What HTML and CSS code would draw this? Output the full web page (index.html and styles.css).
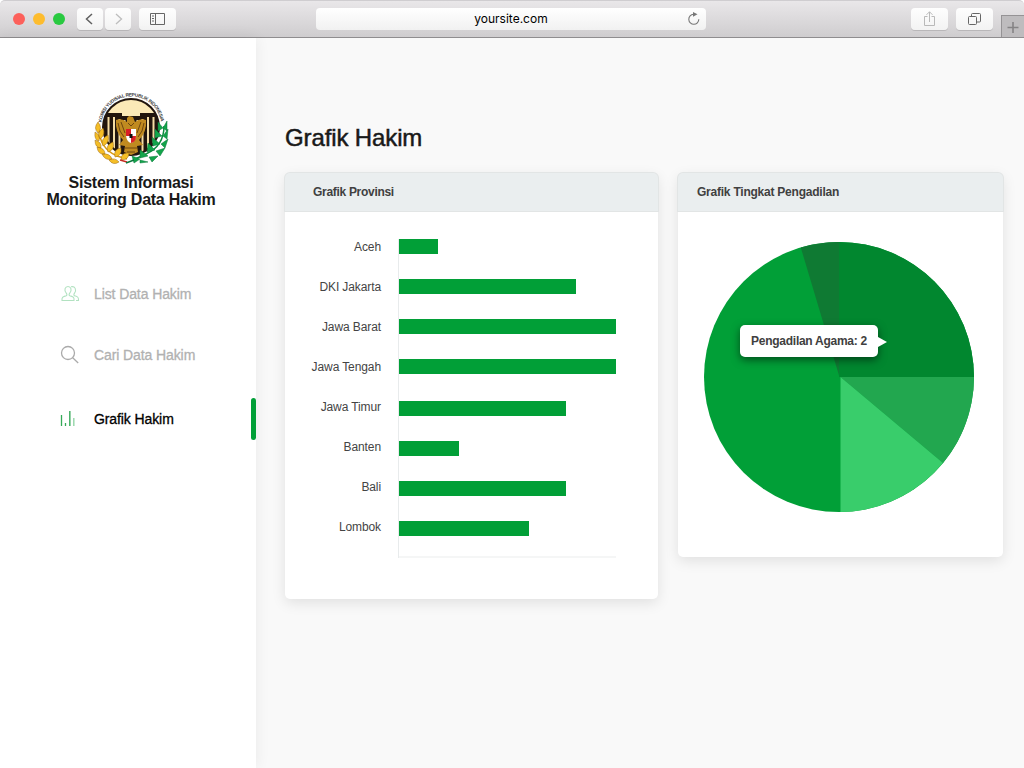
FILE: index.html
```html
<!DOCTYPE html>
<html lang="id">
<head>
<meta charset="utf-8">
<title>Grafik Hakim</title>
<link rel="stylesheet" href="styles.css">
</head>
<body>
<header class="browser">
  <div class="lights"><i class="red"></i><i class="amber"></i><i class="green"></i></div>
  <div class="btn back"><svg width="27" height="22"><path d="M15 6l-5.500 5 5.500 5" fill="none" stroke="#606060" stroke-width="1.500"/></svg></div>
  <div class="btn fwd"><svg width="27" height="22"><path d="M11 6l5.500 5-5.500 5" fill="none" stroke="#bdbdbd" stroke-width="1.300"/></svg></div>
  <div class="btn side"><svg width="37" height="22"><path d="M11.500 5.500h14v11h-14zM16.500 5.500v11M13 8h2M13 10.500h2M13 13h2" fill="none" stroke="#666"/></svg></div>
  <div class="url"><span class="address">yoursite.com</span><svg class="reload" width="14" height="14"><path d="M6.500 2.300a5 5 0 1 0 5.300 5" fill="none" stroke="#777" stroke-width="1.100"/><path d="M6 0l4.500 2.300-4.500 2.500z" fill="#777"/></svg></div>
  <div class="btn share"><svg width="37" height="22"><path d="M16.500 8.500h-3v9h10v-9h-3M18.500 14V3.800M15.500 6.800l3-3 3 3" fill="none" stroke="#b9b9b9"/></svg></div>
  <div class="btn tabs"><svg width="37" height="22"><rect x="12.500" y="8.500" width="8" height="8" rx="1" fill="none" stroke="#666"/><path d="M15.500 8V6.500q0-1 1-1h7q1 0 1 1v6.500q0 1-1 1H21" fill="none" stroke="#666"/></svg></div>
  <div class="newtab"><svg width="22" height="22"><path d="M11 6v11M5.500 11.500h11" stroke="#858385" stroke-width="1.600"/></svg></div>
</header>
<div class="app">
  <aside class="sidebar">
    <svg class="emblem" viewBox="0 0 92 88" width="92" height="88">
      <defs><path id="ring" d="M15.500 38.500a30 30 0 0 1 59.500 0"/><clipPath id="disc"><circle cx="45" cy="43" r="27"/></clipPath></defs>
      <text class="motto"><textPath href="#ring" startOffset="0" textLength="85">KOMISI YUDISIAL REPUBLIK INDONESIA</textPath></text>
      <circle cx="45" cy="43" r="29" fill="#21150e"/>
      <g clip-path="url(#disc)">
        <path d="M27 12h37l4 14v3H54v3H36v-3H22v-3z" fill="#fbe9b7"/>
        <path d="M22.500 33v26M28 33v34M33.500 35v35M38.500 36v12M51.500 36v12M56.500 35v35M62 33v34M67.500 33v26" stroke="#f5dda5" stroke-width="2"/>
      </g>
      <path d="M41 38q-5-4-11-2-1 12 7 20l-4 5 6 1-1 6 7 3 7-3-1-6 6-1-4-5q8-8 7-20-6-2-11 2l-2-5-4-1-2 2z" fill="#c08a20"/>
      <path d="M32 39q1 9 6 14M35 38l4 11M58 39q-1 9-6 14M55 38l-4 11M39 64h12M41 68h8M42 39l3 3 3-3" fill="none" stroke="#6f4710" stroke-width="1"/>
      <path d="M40 45h10v7q-1 6-5 7-4-1-5-7z" fill="#fff"/><path d="M40 45h5v7h5q0 6-5 7v-7h-5z" fill="#d91e27"/><path d="M43.500 50h3v4h-3z" fill="#111"/>
      <path d="M13 44q0 20 18 28l10 3" fill="none" stroke="#d99a15" stroke-width="1.500"/>
      <g fill="#f5be26" stroke="#9b6814" stroke-width=".5">
        <path d="M12 49q-5-5 0-11 5 6 0 11zM14 55q-4-6 3-11 3 7-3 11zM13 57q-5-1-4-9 6 3 4 9zM17 62q-3-7 5-11 2 8-5 11zM15 64q-6 0-6-8 7 2 6 8zM22 68q-3-7 5-10 2 8-5 10zM19 70q-7 1-8-7 8 1 8 7zM29 73q-2-8 6-9 1 8-6 9zM26 75q-7 2-10-5 8-1 10 5zM35 76q0-8 8-7 0 7-8 7zM33 78q-6 4-10-2 6-3 10 2z"/>
      </g>
      <path d="M78 42q0 20-18 28l-13 6" fill="none" stroke="#0c8d3e" stroke-width="1.500"/>
      <path d="M77 44l-5-6v9zM77 44l4-7v10zM76 52l-7-7v9zM77 52l5-7-1 10zM74 60l-8-7 1 9zM75 60l7-5-3 9zM69 66l-7-7-1 9zM70 67l9-3-5 8zM62 72l-8-6v8zM63 73l9-1-6 6zM54 75l-8-3 2 7zM54 76l8 2-8 1z" fill="#12a44a" stroke="#08773a" stroke-width=".5"/>
      <path d="M34 76l7 2" stroke="#c62b20" stroke-width="1.500"/><path d="M40 79l8-3" stroke="#08773a" stroke-width="1.500"/>
    </svg>
    <h2 class="brand">Sistem Informasi<br><span>Monitoring Data Hakim</span></h2>
    <nav class="nav">
      <a class="item list"><svg width="20" height="18"><g fill="none" stroke="#b2e2c1" stroke-width="1.100"><path d="M2 15.500c-.4-4 1.500-3.800 4.200-4.800 1-.4.800-1.500.2-2.300C3.500 5 5.200 1.500 8 1.500s4.500 3.500 1.600 6.900c-.6.800-.8 1.900.2 2.300 2.700 1 4.700.8 4.200 4.800z"/><path d="M11 1.800c4-1 6 3 3.400 6.600-.6.800-.8 1.900.2 2.300 2.200.9 4.200.8 3.900 4.800H16"/></g></svg><span>List Data Hakim</span></a>
      <a class="item search"><svg width="20" height="20"><g fill="none" stroke="#aaa" stroke-width="1.300"><circle cx="8" cy="8" r="6.500"/><path d="M12.700 12.700l5.500 5.300"/></g></svg><span>Cari Data Hakim</span></a>
      <a class="item chart"><svg width="20" height="18"><path d="M1.500 5v11M5.500 13v3" stroke="#35a958" stroke-width="1.300"/><path d="M9.800 1v15" stroke="#4fb46d" stroke-width="1.600"/><path d="M13.800 8v8" stroke="#9bd8ad" stroke-width="1.500"/></svg><span>Grafik Hakim</span><i class="marker"></i></a>
    </nav>
  </aside>
  <main class="content">
    <h1 class="title">Grafik Hakim</h1>
    <div class="cards">
      <section class="card province">
        <h3 class="head">Grafik Provinsi</h3>
        <div class="bars">
          <div class="labels"><span class="l1">Aceh</span><span class="l2">DKI Jakarta</span><span class="l3">Jawa Barat</span><span class="l4">Jawa Tengah</span><span class="l5">Jawa Timur</span><span class="l6">Banten</span><span class="l7">Bali</span><span class="l8">Lombok</span></div>
          <div class="plot"><i style="width:39px"></i><i style="width:177px"></i><i style="width:217px"></i><i style="width:217px"></i><i class="lower" style="width:167px"></i><i style="width:60px"></i><i style="width:167px"></i><i style="width:130px"></i><div class="axis"></div></div>
        </div>
      </section>
      <section class="card court">
        <h3 class="head">Grafik Tingkat Pengadilan</h3>
        <div class="pie">
          <svg width="270" height="270">
            <circle cx="135" cy="135" r="135" fill="#019f37"/>
            <path d="M135.500 135L96.800 5.500A135 135 0 0 1 135.500 0z" fill="#0f7a33"/>
            <path d="M135 135V0a135 135 0 0 1 135 135z" fill="#01872f"/>
            <path d="M136.500 135H270a135 135 0 0 1-31 86z" fill="#22a74f"/>
            <path d="M136.500 135L239 221a135 135 0 0 1-102.500 49z" fill="#39cd6b"/>
          </svg>
          <div class="tip"><span>Pengadilan Agama: 2</span></div>
        </div>
      </section>
    </div>
  </main>
</div>
</body>
</html>
```
FILE: styles.css
```css
* { box-sizing: border-box; }
body { margin: 0; width: 1024px; height: 768px; overflow: hidden; background: #fff; font-family: "Liberation Sans", Arial, sans-serif; }
svg { display: block; flex: none; }
h1, h2, h3 { margin: 0; }

.browser { display: flex; height: 38px; background: linear-gradient(#e9e7e9, #cfcdcf); border-top: 1px solid #cfcdd0; border-bottom: 1px solid #8f8d8f; border-radius: 5px 5px 0 0; padding: 7px 0 0 13px; }
.lights { display: flex; gap: 8px; padding-top: 5px; width: 64px; }
.lights i { width: 12px; height: 12px; border-radius: 50%; }
.red { background: #fc605b; }
.amber { background: #fdbc2e; }
.green { background: #29c940; }
.btn { height: 22px; border-radius: 4px; background: linear-gradient(#fefefe, #f3f3f3); box-shadow: 0 1px 0 #b9b7b9; }
.back, .fwd { width: 26px; }
.fwd { margin-left: 2px; }
.side, .share, .tabs { width: 37px; }
.side { margin-left: 8px; }
.url { display: flex; position: relative; width: 390px; height: 22px; margin-left: 140px; justify-content: center; border-radius: 4px; background: linear-gradient(#fff, #f1f1f1); }
.address { font: 12px/22px Inter, sans-serif; color: #000; }
.reload { position: absolute; right: 5px; top: 4px; }
.share { margin-left: 205px; }
.tabs { margin-left: 8px; }
.newtab { width: 23px; height: 22px; margin: 7px 0 0 8px; border: 1px solid #959395; border-right: 0; border-bottom: 0; background: #bebcbe; }

.app { display: flex; height: 730px; }
.sidebar { width: 256px; height: 730px; background: #fff; box-shadow: 0 0 14px rgba(0,0,0,.07); padding-top: 46px; z-index: 1; }
.emblem { margin-left: 86px; }
.motto { font: bold 4.800px "Liberation Sans", sans-serif; fill: #3c3c3c; }
.brand { margin: 2px 0 0 6px; height: 34px; text-align: center; font-size: 16px; line-height: 17px; font-weight: 700; letter-spacing: -.25px; color: #191919; }
.nav { display: flex; flex-direction: column; padding: 65px 0 0 60px; }
.item { display: flex; align-items: center; height: 42px; font-size: 14px; letter-spacing: -.1px; color: #b1b1b1; -webkit-text-stroke: .3px; }
.item span { margin-left: 14px; }
.search { margin-top: 19px; }
.chart { margin-top: 22px; color: #000; }
.marker { width: 5px; height: 42px; border-radius: 3px; background: #019f37; margin-left: auto; }

.content { flex: 1; padding: 84px 0 0 29px; background: #f9f9f9; }
.title { height: 51px; font-size: 24px; line-height: 32px; font-weight: 400; letter-spacing: -.12px; color: #191919; -webkit-text-stroke: .5px; }
.cards { display: flex; align-items: flex-start; gap: 20px; }
.card { background: #fff; border-radius: 5px; box-shadow: 0 4px 14px rgba(0,0,0,.1); }
.province { width: 373px; height: 426px; }
.court { width: 325px; height: 384px; }
.head { height: 38px; background: #eaeeef; box-shadow: 0 0 0 1px #e2e5e5; border-radius: 5px 5px 0 0; padding-left: 28px; font-size: 12px; line-height: 39px; letter-spacing: -.3px; color: #404040; }
.court .head { padding-left: 19px; letter-spacing: -.23px; }
.bars { display: flex; padding-top: 28px; }
.labels { display: flex; flex-direction: column; width: 96px; margin-top: -12px; align-items: flex-end; font-size: 12px; line-height: 40px; letter-spacing: -.1px; color: #444; }
.plot { display: flex; flex-direction: column; gap: 25px; width: 218px; height: 319px; margin-left: 17px; border-left: 1px solid #e8ebec; }
.plot i { height: 15px; flex: none; background: #019f37; }
.plot .lower { margin-top: 2px; }
.axis { height: 2px; margin-top: -5px; background: #f5f6f6; }
.pie { position: relative; padding: 31px 0 0 26px; }
.tip { position: absolute; left: 62px; top: 114px; width: 138px; height: 32px; border-radius: 5px; background: #fff; box-shadow: 0 3px 9px rgba(0,0,0,.5); text-align: center; font-size: 12px; line-height: 33px; font-weight: 700; letter-spacing: -.27px; color: #404040; }
.tip::after { content: ""; position: absolute; left: 138px; top: 12px; border: 5px solid transparent; border-left: 9px solid #fff; border-right: 0; }
```
